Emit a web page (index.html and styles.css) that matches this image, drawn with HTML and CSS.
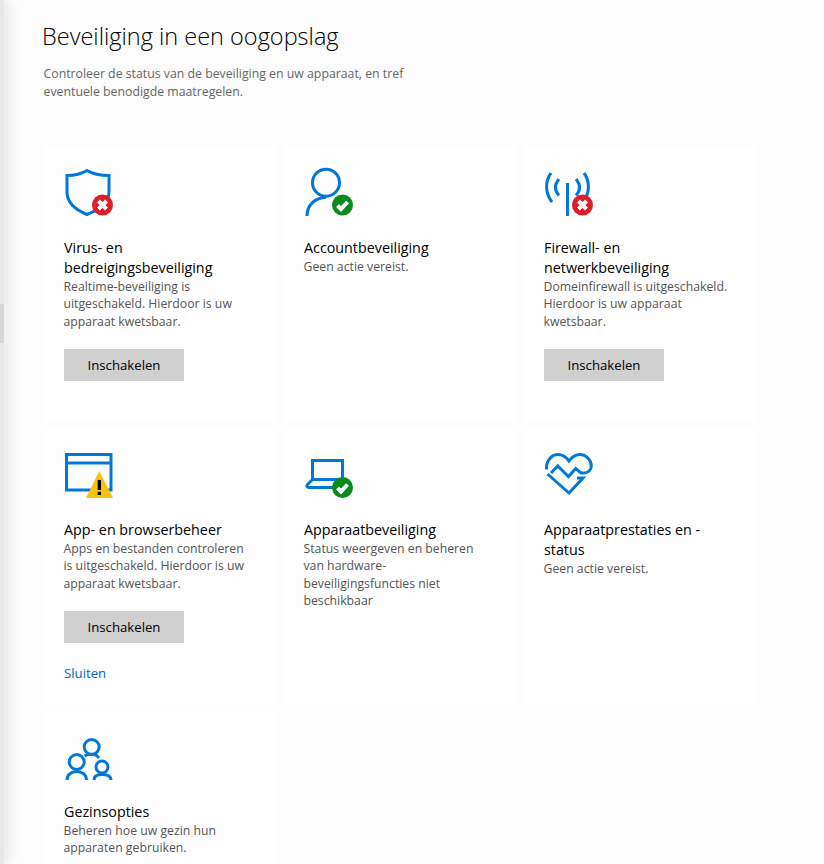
FILE: index.html
```html
<!DOCTYPE html>
<html lang="nl">
<head>
<meta charset="utf-8">
<title>Beveiliging in een oogopslag</title>
<link rel="stylesheet" href="styles.css">
</head>
<body>
<div class="app">
  <aside class="rail"><div class="rail-thumb"></div></aside>
  <main class="main">
    <h1 class="title">Beveiliging in een oogopslag</h1>
    <p class="intro">Controleer de status van de beveiliging en uw apparaat, en tref eventuele benodigde maatregelen.</p>
    <section class="grid">
      <article class="card">
        <svg class="icon" viewBox="0 0 50 50"><path class="st" d="M23 3.500C18 6.500 12 8.500 3 8.500V25C3 36 12 43 23 47.500C34 43 45 36 45 25V8.500C34 8.500 28 6.500 23 3.500Z"/><circle class="red" cx="38.500" cy="38" r="10.500"/><path class="x" d="M34.500 34L42.500 42M42.500 34L34.500 42"/></svg>
        <h2 class="card-title">Virus- en bedreigingsbeveiliging</h2>
        <p class="card-text">Realtime-beveiliging is uitgeschakeld. Hierdoor is uw apparaat kwetsbaar.</p>
        <button class="btn">Inschakelen</button>
      </article>
      <article class="card">
        <svg class="icon" viewBox="0 0 50 50"><circle class="st" cx="22" cy="15.700" r="13.500"/><path class="st" d="M3 49C3 38 11 30.500 22 30.500"/><circle class="green" cx="38.500" cy="38" r="10.500"/><path class="x" d="M33.500 38.500L37 42L43.500 35"/></svg>
        <h2 class="card-title">Accountbeveiliging</h2>
        <p class="card-text">Geen actie vereist.</p>
      </article>
      <article class="card">
        <svg class="icon" viewBox="0 0 50 50"><path class="st" d="M23.500 16V49"/><path class="st" d="M7 6C1 14 1 26 8 35M40 6C46 14 46 26 39 35M15 12C10 18 10 23 15 28.500M32 12C37 18 37 23 32 28.500"/><circle class="red" cx="38.500" cy="38" r="10.500"/><path class="x" d="M34.500 34L42.500 42M42.500 34L34.500 42"/></svg>
        <h2 class="card-title">Firewall- en netwerkbeveiliging</h2>
        <p class="card-text">Domeinfirewall is uitgeschakeld. Hierdoor is uw apparaat kwetsbaar.</p>
        <button class="btn">Inschakelen</button>
      </article>
      <article class="card">
        <svg class="icon" viewBox="0 0 50 50"><path class="st" d="M2.500 5.500H47V41H2.500ZM2.500 14H47"/><path class="amber" d="M35.300 22L49 49H22Z"/><path class="bang" d="M33.700 31H37V41H33.700ZM33.700 42.700H37V46H33.700Z"/></svg>
        <h2 class="card-title">App- en browserbeheer</h2>
        <p class="card-text">Apps en bestanden controleren is uitgeschakeld. Hierdoor is uw apparaat kwetsbaar.</p>
        <button class="btn">Inschakelen</button>
        <a class="link" href="#">Sluiten</a>
      </article>
      <article class="card">
        <svg class="icon" viewBox="0 0 50 50"><path class="st" d="M8.500 31V11.500H38.500V31"/><path class="st" d="M8.500 30.500L3.500 35.500C2 37 3 38.500 5 38.500H36M8.500 30.500H36"/><circle class="green" cx="38.500" cy="38.500" r="10.500"/><path class="x" d="M33.500 39L37 42.500L43.500 35.500"/></svg>
        <h2 class="card-title">Apparaatbeveiliging</h2>
        <p class="card-text">Status weergeven en beheren van hardware-beveiligingsfuncties niet beschikbaar</p>
      </article>
      <article class="card">
        <svg class="icon" viewBox="0 0 50 50"><path class="st" d="M2.500 20.500C2 11 8 5.500 14 5.500C18 5.500 22 8 25 12C28 8 32 5.500 36 5.500C42 5.500 47.300 11 47.300 17C47.300 21 44 24 40 24H37L31.700 19.500L24.500 27.500L13.700 17L7 24"/><path class="st" d="M3.500 25L25 44L39 29H33"/></svg>
        <h2 class="card-title">Apparaatprestaties en -status</h2>
        <p class="card-text">Geen actie vereist.</p>
      </article>
      <article class="card">
        <svg class="icon" viewBox="0 0 50 50"><circle class="st" cx="27.700" cy="16" r="7.500"/><circle class="st" cx="12.700" cy="31" r="7.500"/><circle class="st" cx="38" cy="36" r="6"/><path class="st" d="M3 49C3 44 7 40.500 12.700 40.500C18.500 40.500 22.500 44 22.500 49M30 49C30 45 33 43.500 38 43.500C43 43.500 47 45 47 49M20.500 25C23 23.500 25 23.300 27.700 23.300C30.500 23.300 33 24 35 27"/></svg>
        <h2 class="card-title">Gezinsopties</h2>
        <p class="card-text">Beheren hoe uw gezin hun apparaten gebruiken.</p>
      </article>
    </section>
  </main>
</div>
</body>
</html>
```

FILE: styles.css
```css
* { box-sizing: border-box; }
html, body { margin: 0; height: 864px; overflow: hidden; }
body { background: #fcfcfc; font-family: "Open Sans", "Noto Sans", sans-serif; color: #000; }
.app { display: flex; height: 864px; overflow: hidden; }
.rail { width: 4px; flex: none; background: #e9e9e9; box-shadow: 2px 0 14px rgba(0,0,0,.22); position: relative; }
.rail-thumb { height: 39px; margin-top: 304px; background: #d6d6d6; }
.main { flex: 1; padding: 20px 0 0 40px; }
.title { margin: 0 0 0 -2px; font-size: 23.500px; line-height: 32px; font-weight: 300; }
.intro { margin: 13px 0 0 -.5px; width: 372px; font-size: 12.300px; line-height: 18px; color: #666; }
.grid { display: grid; grid-template-columns: repeat(3, 232px); grid-auto-rows: 274px; gap: 8px; margin-top: 46px; }
.card { background: #fefefe; padding: 20px; display: flex; flex-direction: column; align-items: flex-start; }
.icon { width: 50px; height: 50px; margin-bottom: 21px; overflow: visible; flex: none; }
.card-title { margin: 0; font-size: 14.300px; line-height: 20px; font-weight: 400; }
.card-text { margin: 0 0 0 -.5px; width: 188px; font-size: 12.250px; line-height: 17.400px; color: #555; }
.btn { width: 120px; height: 32px; margin-top: 19px; border: 0; background: #cfcfcf; font: inherit; font-size: 13.200px; color: #000; padding: 0; }
.link { margin-top: 21px; font-size: 13.200px; line-height: 18px; color: #0067c0; text-decoration: none; }
.st { fill: none; stroke: #0078d7; stroke-width: 3; }
.red { fill: #dd1f2c; }
.green { fill: #0b8a1e; }
.x { fill: none; stroke: #fff; stroke-width: 4; }
.amber { fill: #fcc10f; }
.bang { fill: #000; }
```
